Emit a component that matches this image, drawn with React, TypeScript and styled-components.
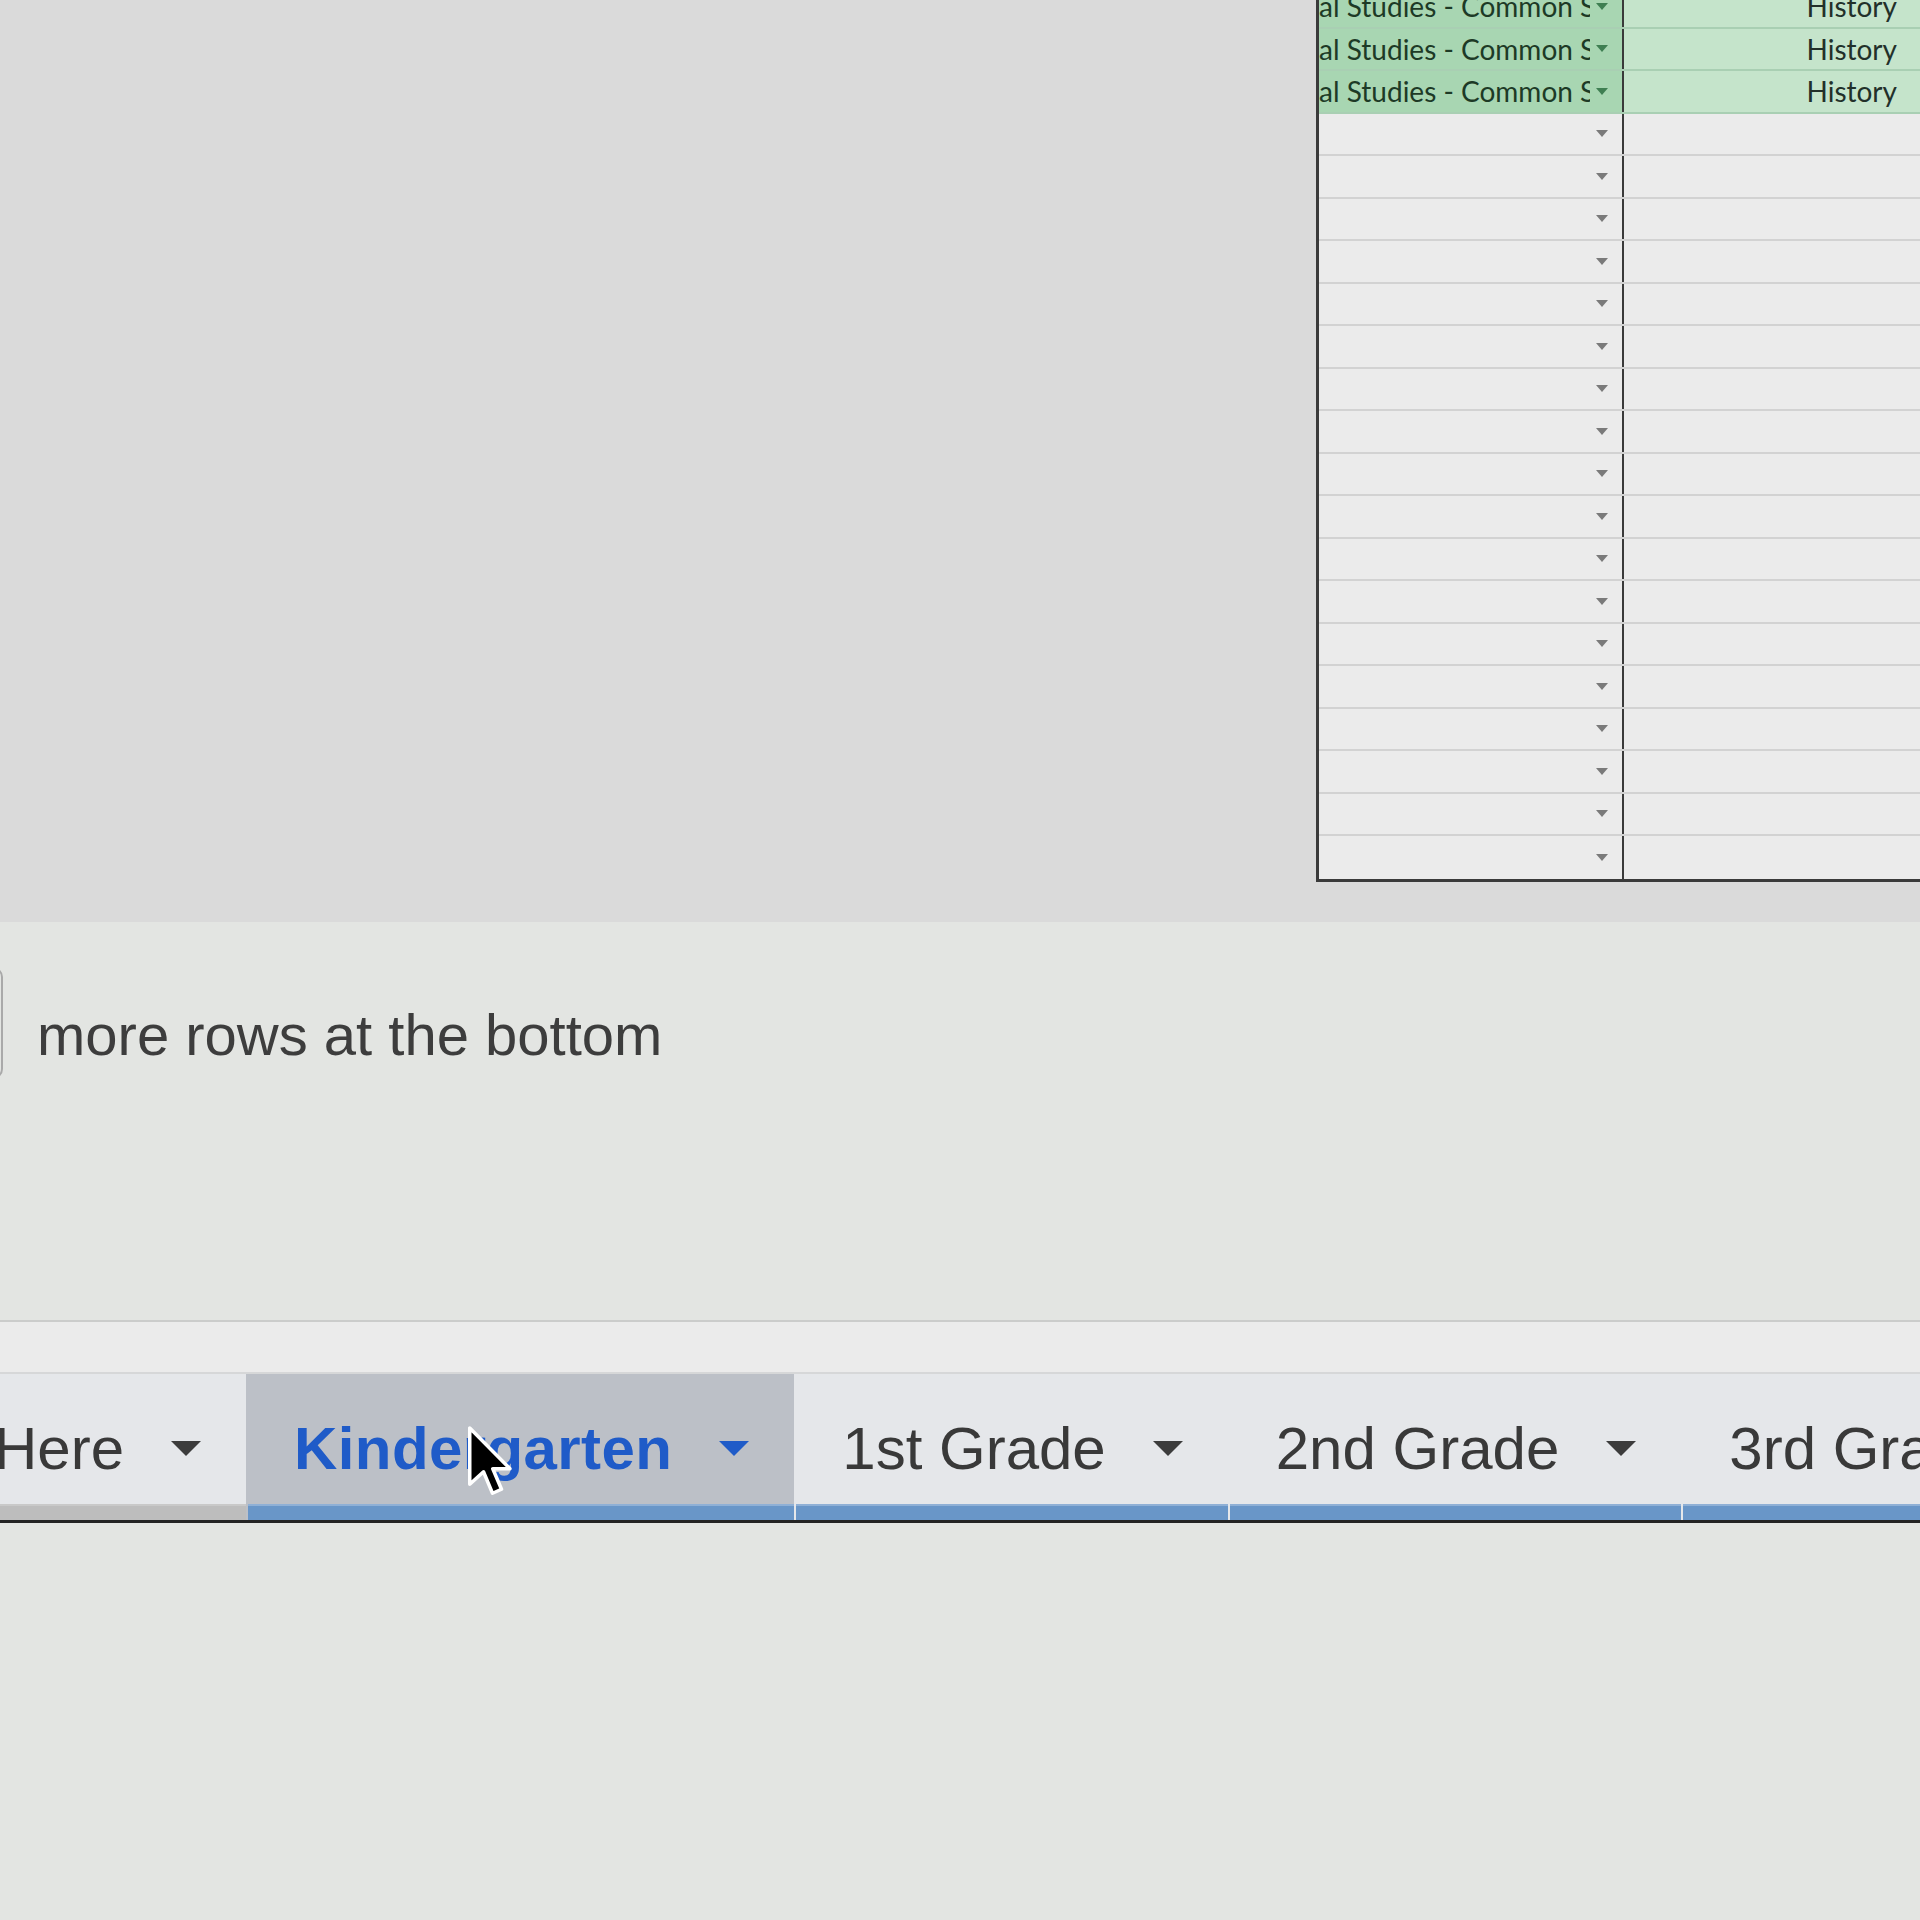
import React from "react";
import styled, {createGlobalStyle} from "styled-components";

const GlobalStyle = createGlobalStyle`
  html, body {
    margin: 0;
    padding: 0;
    background: #e3e5e2;
  }
`

type SheetRow = { subject?: string; strand?: string };

const filledRows: SheetRow[] = [
    {subject: "Social Studies - Common Standards", strand: "History"},
    {subject: "Social Studies - Common Standards", strand: "History"},
    {subject: "Social Studies - Common Standards", strand: "History"},
];
const rows: SheetRow[] = [...filledRows, ...Array.from({length: 18}, () => ({}))];

type SheetTab = { name: string; active?: boolean; underline: "grey" | "blue" };

const tabs: SheetTab[] = [
    {name: "Here", underline: "grey"},
    {name: "Kindergarten", active: true, underline: "blue"},
    {name: "1st Grade", underline: "blue"},
    {name: "2nd Grade", underline: "blue"},
    {name: "3rd Grade", underline: "blue"},
];

const DropArrow = ({color}: { color: string }) =>
    <svg width="12" height="7" viewBox="0 0 12 7">
        <path d="M0 0 L12 0 L6 7 Z" fill={color}/>
    </svg>;

const TabArrow = ({color}: { color: string }) =>
    <svg width="30" height="15" viewBox="0 0 30 15">
        <path d="M0 0 L30 0 L15 15 Z" fill={color}/>
    </svg>;

const Pointer = () =>
    <svg width="50" height="78" viewBox="0 0 20 31">
        <path d="M1.5 1.5 L1.5 24 L7 19 L10.6 27.6 L14.2 26 L10.7 17.8 L17.6 17.8 Z"
              fill="#000" stroke="#fff" strokeWidth="1.4" strokeLinejoin="round"/>
    </svg>;

export default function App() {
    return <Page>
        <GlobalStyle/>
        <SheetArea>
            <Sheet>
                {rows.map((row, i) =>
                    <Row key={i} $filled={!!row.subject} $last={i === rows.length - 1}>
                        <ChipCell $filled={!!row.subject}>
                            <ChipText>{row.subject && <ClippedLabel>{row.subject}</ClippedLabel>}</ChipText>
                            <DropArrow color={row.subject ? "#3f7f52" : "#7a7a7a"}/>
                        </ChipCell>
                        <ValueCell $filled={!!row.subject}>{row.strand}</ValueCell>
                    </Row>)}
            </Sheet>
        </SheetArea>
        <Footer>
            <AddRowsBar>
                <CountBox/>
                <AddRowsText>more rows at the bottom</AddRowsText>
            </AddRowsBar>
            <TabStrip>
                <TabBand/>
                <TabViewport>
                    <TabRow>
                        {tabs.map((tab, i) =>
                            <Tab key={tab.name} $active={!!tab.active}>
                                <TabLabel $active={!!tab.active}>
                                    <TabName $active={!!tab.active}>{tab.name}</TabName>
                                    {tab.name !== "3rd Grade" &&
                                        <TabArrow color={tab.active ? "#1f5bc8" : "#3c3c3c"}/>}
                                </TabLabel>
                                <TabBar $color={tab.underline} $first={i === 0}/>
                            </Tab>)}
                    </TabRow>
                </TabViewport>
                <BottomRule/>
            </TabStrip>
            <Cursor><Pointer/></Cursor>
        </Footer>
    </Page>
}

const Page = styled.div`
  width: 1920px;
  height: 1920px;
  overflow: hidden;
  display: flex;
  flex-direction: column;
  background: #e3e5e2;
`

const SheetArea = styled.div`
  height: 922px;
  flex-shrink: 0;
  overflow: hidden;
  background: #dadada;
  display: flex;
  justify-content: flex-end;
  align-items: flex-start;
`

const Sheet = styled.div`
  width: 601px;
  margin-top: -14px;
  border-left: 3px solid #3a3a3a;
  border-bottom: 3px solid #3a3a3a;
  font-family: Lato, "Open Sans", sans-serif;
  font-size: 28px;
`

const Row = styled.div<{ $filled: boolean; $last: boolean }>`
  display: flex;
  height: 42.5px;
  box-sizing: border-box;
  border-bottom: ${p => p.$last ? "none" : `2px solid ${p.$filled ? "#a9cfb3" : "#d2d2d2"}`};
`

const ChipCell = styled.div<{ $filled: boolean }>`
  width: 305px;
  flex-shrink: 0;
  box-sizing: border-box;
  display: flex;
  align-items: center;
  gap: 6px;
  padding-right: 14px;
  border-right: 2px solid #3a3a3a;
  background: ${p => p.$filled ? "#a8d6b2" : "#ebebeb"};
`

const ChipText = styled.div`
  flex: 1;
  overflow: hidden;
  white-space: nowrap;
  color: #1d3a26;
`

const ClippedLabel = styled.span`
  display: inline-block;
  margin-left: -51px;
`

const ValueCell = styled.div<{ $filled: boolean }>`
  flex: 1;
  display: flex;
  align-items: center;
  justify-content: flex-end;
  padding-right: 23px;
  color: #22302a;
  background: ${p => p.$filled ? "#c5e4cb" : "#ebebeb"};
`

const Footer = styled.div`
  position: relative;
  flex: 1;
  display: flex;
  flex-direction: column;
`

const AddRowsBar = styled.div`
  height: 398px;
  box-sizing: border-box;
  padding-top: 45px;
  display: flex;
  align-items: flex-start;
`

const CountBox = styled.div`
  width: 40px;
  height: 112px;
  margin-left: -37px;
  flex-shrink: 0;
  box-sizing: border-box;
  border: 2px solid #a9a9a9;
  border-radius: 10px;
`

const AddRowsText = styled.div`
  margin: 12px 0 0 34px;
  line-height: 112px;
  font-family: "Liberation Sans", Arial, sans-serif;
  font-size: 58px;
  color: #3d3d3d;
`

const TabStrip = styled.div`
  display: flex;
  flex-direction: column;
  border-top: 2px solid #cbcccb;
`

const TabBand = styled.div`
  height: 50px;
  background: #ebebeb;
  border-bottom: 2px solid #d6d7d8;
`

const TabViewport = styled.div`
  overflow: hidden;
  background: #e5e7ea;
`

/* scrolled so the first sheet tab is partly hidden */
const TabRow = styled.div`
  display: flex;
  white-space: nowrap;
  margin-left: -54px;
`

const Tab = styled.div<{ $active: boolean }>`
  display: flex;
  flex-direction: column;
  flex-shrink: 0;
  background: ${p => p.$active ? "#bcc0c7" : "#e5e7ea"};
`

const TabLabel = styled.div<{ $active: boolean }>`
  height: 130px;
  box-sizing: border-box;
  padding: 18px 45px 0 48px;
  display: flex;
  align-items: center;
  gap: 47px;
`

const TabName = styled.span<{ $active: boolean }>`
  font-family: "Liberation Sans", Arial, sans-serif;
  font-size: 60px;
  font-weight: ${p => p.$active ? 700 : 400};
  letter-spacing: ${p => p.$active ? "0.4px" : "0"};
  color: ${p => p.$active ? "#1f5bc8" : "#393939"};
`

const TabBar = styled.div<{ $color: "grey" | "blue"; $first: boolean }>`
  height: 14px;
  margin-left: ${p => p.$first ? "0" : "2px"};
  background: ${p => p.$color === "blue" ? "#6996c8" : "#bdbdbd"};
  border-top: 2px solid ${p => p.$color === "blue" ? "#8fb0d6" : "#c9c9c9"};
`

const BottomRule = styled.div`
  height: 3px;
  background: #232323;
`

const Cursor = styled.div`
  position: absolute;
  left: 466px;
  top: 502px;
  pointer-events: none;
`
